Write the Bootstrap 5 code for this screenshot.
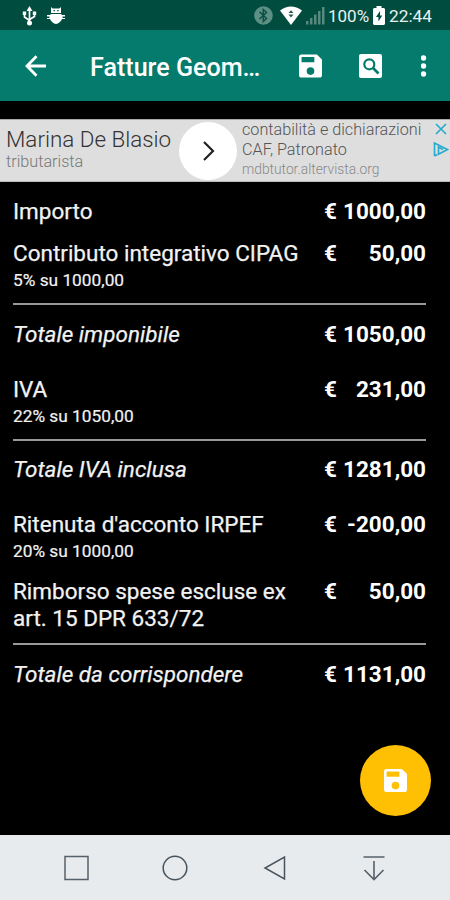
<!DOCTYPE html>
<html lang="it">
<head>
<meta charset="utf-8">
<meta name="viewport" content="width=device-width, initial-scale=1">
<title>Fatture Geometri</title>
<link href="https://cdn.jsdelivr.net/npm/bootstrap@5.3.0/dist/css/bootstrap.min.css" rel="stylesheet">
<style>
body{font-family:Roboto,"Liberation Sans",sans-serif;background:#000;color:#f2f2f2;width:450px;height:900px;overflow:hidden}
svg{display:block;flex:none}
.statusbar{height:30px;background:#004c3f;padding:1px 18px 0 22px;color:#e9f1ef;line-height:30px}
.droid{margin-left:10px}
.wifi{margin-left:7px}
.signal{margin-left:4px}
.pct{font-size:17px;margin-left:3px;width:41px;white-space:nowrap}
.clock{width:43px;margin-left:4px;font-size:17.3px;white-space:nowrap}
.appbar{height:71px;background:#047b6c;padding:0 19px 0 24px}
.app-title{font-size:25.1px;font-weight:500;margin:4px 0 0 43px;width:170px;line-height:34px;color:#fff;white-space:nowrap}
.act-save{margin-left:39px}
.act-find{margin-left:37px}
.ad{height:63px;margin-top:18px;background:#dedede;border-top:1px solid #aaa;border-bottom:1px solid #bbb;color:#555}
.ad-left{width:179px;padding:6px 0 0 6px;white-space:nowrap}
.ad-name{font-size:22.4px;line-height:27px;font-weight:300;color:#333}
.ad-sub{font-size:16.2px;line-height:18px;font-weight:300;color:#777}
.ad-go{width:58px;height:58px;background:#fff}
.ad-copy{padding-left:5px;width:190px;font-weight:300;font-size:16.2px;line-height:20px;white-space:nowrap}
.ad-url{font-size:13.8px;line-height:19px;color:#888}
.invoice{padding:15.5px 24px 0 13px}
.label{font-size:22.5px;line-height:26.5px;white-space:nowrap;-webkit-text-stroke:.25px currentColor}
.detail{font-size:17.3px;line-height:22px;margin-top:2.5px;-webkit-text-stroke:.2px currentColor}
.amount{width:102px;font-size:22.5px;line-height:26.5px;font-weight:700;color:#fff;white-space:nowrap}
.after{margin-bottom:16px}
.total{border-top:2px solid #999;padding-top:15.5px;margin-bottom:28.5px}
.fab{right:19px;top:745px;width:71px;height:71px;background:#ffc004}
.sysnav{height:65px;background:#e8ebee;padding:0 62px 0 62px}
</style>
</head>
<body class="d-flex flex-column position-relative">
<svg class="d-none"><symbol id="disk" viewBox="3 3 18 18"><path fill-rule="evenodd" d="M17 3H5a2 2 0 0 0-2 2v14a2 2 0 0 0 2 2h14a2 2 0 0 0 2-2V7zM12 19a3 3 0 1 1 0-6 3 3 0 0 1 0 6zM15 9H5V5h10z"/></symbol></svg>
<header>
<div class="statusbar d-flex align-items-center">
<svg width="15" height="20" viewBox="0 0 15 20" fill="none" stroke="#fff" stroke-width="1.700"><path d="M7.500 3v13M2.500 7v4l5 3.500M12.500 7v3.500L7.500 13.500"/><path fill="#fff" stroke="none" d="M7.500 0l3 5h-6zM.8 5.500h3.400v3.400H.8zM10.800 5.500h3.400v3.400h-3.400z"/><circle cx="7.500" cy="17" r="2.500" fill="#fff" stroke="none"/></svg>
<svg width="18" height="18" viewBox="0 0 18 18" class="droid me-auto" fill="#fff"><path d="M4 0l1.600 1.500h6.800L14 0v6H4zM3.500 7h11v1H18v1.500h-2.500V11H18v1h-3c-.8 2.700-3.500 4.500-6 5-2.500-.5-5.200-2.300-6-5H0v-1h2.500V9.500H0V8h3.500z"/><path fill="#004c3f" d="M6.500 3h1.400v1.200H6.500zM10.200 3h1.400v1.200h-1.400z"/></svg>
<svg width="19" height="19" viewBox="0 0 19 19"><circle cx="9.500" cy="9.500" r="9.300" fill="#5e8f85"/><path d="M5.500 5.800l7 6.700-3.200 3V3.500l3.200 3-7 6.500" fill="none" stroke="#0b5144" stroke-width="1.500"/></svg>
<svg width="22" height="19" viewBox="0 0 22 19" class="wifi"><path fill="#fff" d="M0 4.500Q11-3.500 22 4.500L11 19z"/><path fill="#24594f" d="M8.500 7L11 4.200 13.500 7zM8.500 8.500h5L11 11.500z"/></svg>
<svg width="19" height="19" viewBox="0 0 19 19" class="signal" fill="#57897f"><path d="M0 15h2.500v3.500H0zM4 12h2.500v6.500H4zM8 8.500h2.500v10H8zM12 5h2.500v13.500H12zM16 1h2.500v17.500H16z"/></svg>
<span class="pct">100%</span>
<svg width="12" height="19" viewBox="0 0 12 19" class="ms-1"><path fill="#fff" d="M3.500 0h5v2H11l1 1v15l-1 1H1l-1-1V3l1-1h2.500z"/><path fill="#004c3f" d="M7 5L3 11h2.400v4.500L9.300 9.500H7z"/></svg>
<span class="clock">22:44</span>
</div>
<nav class="appbar d-flex align-items-center" aria-label="Azioni">
<svg width="23" height="22" viewBox="0 0 23 22" fill="none" stroke="#fff" stroke-width="2.800"><path d="M12.500 1.300L3 11l9.500 9.700M2.500 11H22"/></svg>
<h1 class="app-title mb-0">Fatture Geom…</h1>
<svg width="23" height="24" fill="#fff" class="act-save"><use href="#disk"/></svg>
<svg width="23" height="24" viewBox="0 0 23 24" class="act-find"><rect width="23" height="24" rx="2" fill="#fff"/><circle cx="10.300" cy="10.300" r="5" fill="none" stroke="#047b6c" stroke-width="2.200"/><path d="M13.500 13.500l6 6" stroke="#047b6c" stroke-width="2.600"/></svg>
<svg width="6" height="22" viewBox="0 0 6 22" fill="#fff" class="ms-auto me-1"><circle cx="2.500" cy="3" r="2.700"/><circle cx="2.500" cy="11" r="2.700"/><circle cx="2.500" cy="19" r="2.700"/></svg>
</nav>
</header>
<aside class="ad d-flex flex-shrink-0">
<div class="ad-left flex-shrink-0"><div class="ad-name">Marina De Blasio</div><div class="ad-sub">tributarista</div></div>
<div class="ad-go rounded-circle d-flex align-items-center justify-content-center align-self-center flex-shrink-0"><svg width="13" height="20" viewBox="0 0 13 20" fill="none" stroke="#222" stroke-width="2.200"><path d="M2 1l9 9-9 9"/></svg></div>
<div class="ad-copy"><div>contabilità e dichiarazioni</div><div>CAF, Patronato</div><div class="ad-url">mdbtutor.altervista.org</div></div>
<svg width="18" height="38" viewBox="0 0 18 38" fill="none" stroke="#27a9cc" stroke-width="1.600" class="ms-auto"><path d="M4 4l10 10M14 4L4 14M2.500 36V23L15.500 29.500 6 34.500M2.500 36l3-1.500M6.500 34V27l4.500 2.500"/></svg>
</aside>
<main class="invoice flex-grow-1">
<div class="d-flex justify-content-between after"><div class="label">Importo</div><div class="amount d-flex justify-content-between"><span>€</span><span>1000,00</span></div></div>
<div class="d-flex justify-content-between mb-2 pb-1"><div><div class="label">Contributo integrativo CIPAG</div><div class="detail">5% su 1000,00</div></div><div class="amount d-flex justify-content-between"><span>€</span><span>50,00</span></div></div>
<div class="d-flex justify-content-between total"><div class="label fst-italic">Totale imponibile</div><div class="amount d-flex justify-content-between"><span>€</span><span>1050,00</span></div></div>
<div class="d-flex justify-content-between mb-2 pb-1"><div><div class="label">IVA</div><div class="detail">22% su 1050,00</div></div><div class="amount d-flex justify-content-between"><span>€</span><span>231,00</span></div></div>
<div class="d-flex justify-content-between total"><div class="label fst-italic">Totale IVA inclusa</div><div class="amount d-flex justify-content-between"><span>€</span><span>1281,00</span></div></div>
<div class="d-flex justify-content-between after"><div><div class="label">Ritenuta d'acconto IRPEF</div><div class="detail">20% su 1000,00</div></div><div class="amount d-flex justify-content-between"><span>€</span><span>-200,00</span></div></div>
<div class="d-flex justify-content-between mb-2 pb-1"><div class="label">Rimborso spese escluse ex<br>art. 15 DPR 633/72</div><div class="amount d-flex justify-content-between"><span>€</span><span>50,00</span></div></div>
<div class="d-flex justify-content-between total mb-0"><div class="label fst-italic">Totale da corrispondere</div><div class="amount d-flex justify-content-between"><span>€</span><span>1131,00</span></div></div>
</main>
<button class="fab btn p-0 border-0 rounded-circle position-absolute d-flex align-items-center justify-content-center" aria-label="Salva"><svg width="23" height="23" fill="#fff"><use href="#disk"/></svg></button>
<footer class="sysnav d-flex align-items-center justify-content-between flex-shrink-0">
<svg width="28" height="28" viewBox="0 0 28 28" fill="none" stroke="#56606a" stroke-width="1.500"><path d="M3 2.500h23v23H3z"/></svg>
<svg width="28" height="28" viewBox="0 0 28 28" fill="none" stroke="#47545e" stroke-width="1.500"><circle cx="14" cy="14" r="11.800"/></svg>
<svg width="28" height="28" viewBox="0 0 28 28" fill="none" stroke="#47545e" stroke-width="1.500"><path d="M23.500 3v22L4 14z"/></svg>
<svg width="28" height="28" viewBox="0 0 28 28" fill="none" stroke="#56606a" stroke-width="1.600"><path d="M3.500 3h21M14 7v18M4.500 16l9.500 9.500 9.500-9.500"/></svg>
</footer>
<script src="https://cdn.jsdelivr.net/npm/bootstrap@5.3.0/dist/js/bootstrap.bundle.min.js"></script>
</body>
</html>
